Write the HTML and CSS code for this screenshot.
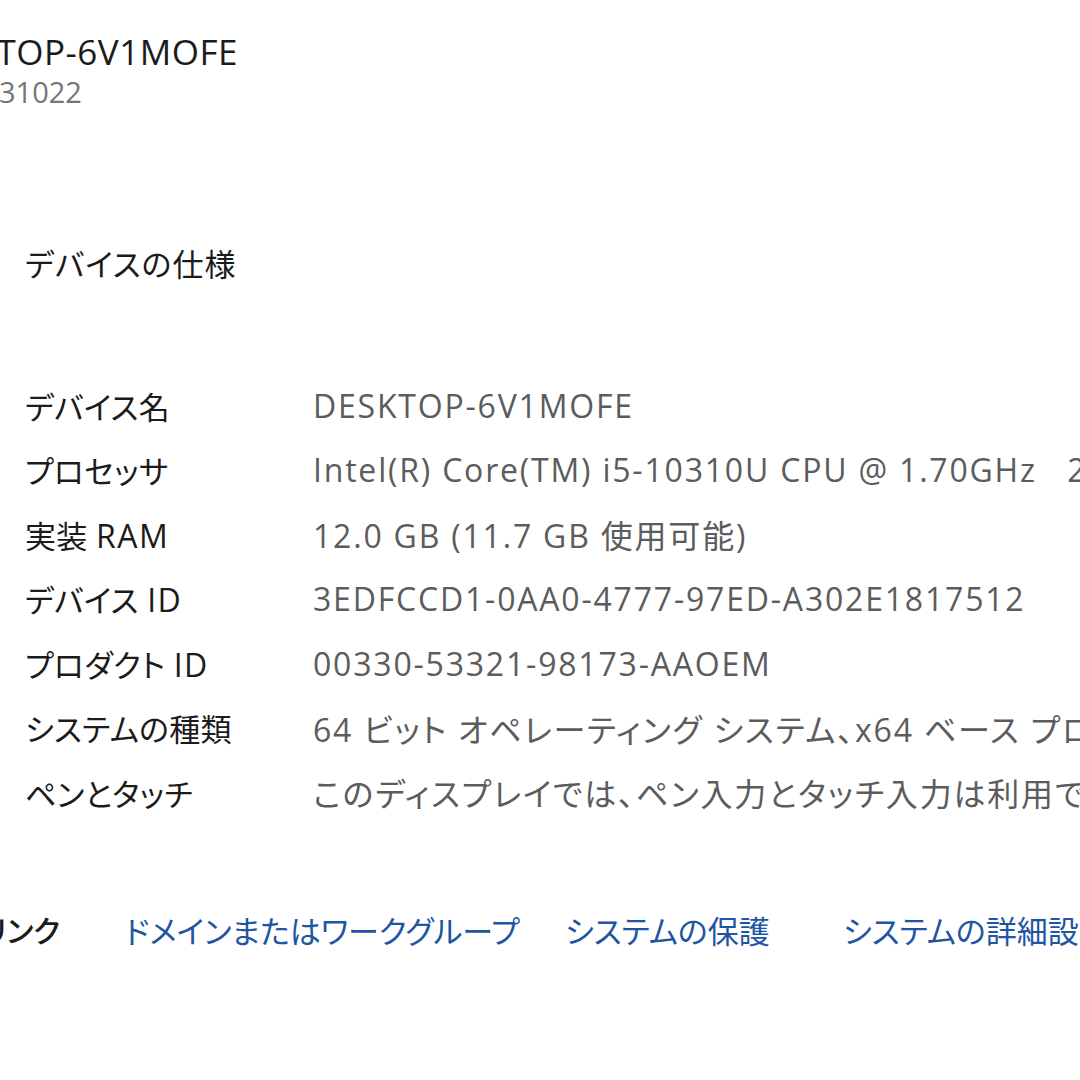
FILE: index.html
```html
<!DOCTYPE html>
<html lang="ja">
<head>
<meta charset="utf-8">
<title>バージョン情報</title>
<link rel="stylesheet" href="styles.css">
</head>
<body>
<div class="page">
  <div class="top">
    <div class="pc-name">DESKTOP-6V1MOFE</div>
    <div class="pc-model">31022</div>
  </div>

  <h2 class="heading">デバイスの仕様</h2>

  <div class="specs">
    <div class="label">デバイス名</div><div class="value">DESKTOP-6V1MOFE</div>
    <div class="label">プロセッサ</div><div class="value">Intel(R) Core(TM) i5-10310U CPU @ 1.70GHz&nbsp;&nbsp;&nbsp;2.21 GHz</div>
    <div class="label">実装 <span class="latin">RAM</span></div><div class="value">12.0 GB (11.7 GB 使用可能)</div>
    <div class="label">デバイス <span class="latin">ID</span></div><div class="value">3EDFCCD1-0AA0-4777-97ED-A302E1817512</div>
    <div class="label">プロダクト <span class="latin">ID</span></div><div class="value">00330-53321-98173-AAOEM</div>
    <div class="label">システムの種類</div><div class="value">64 ビット オペレーティング システム、x64 ベース プロセッサ</div>
    <div class="label">ペンとタッチ</div><div class="value">このディスプレイでは、ペン入力とタッチ入力は利用できません</div>
  </div>

  <div class="links">
    <div class="links-title">関連リンク</div>
    <a class="link" href="#">ドメインまたはワークグループ</a>
    <a class="link" href="#">システムの保護</a>
    <a class="link" href="#">システムの詳細設定</a>
  </div>
</div>
</body>
</html>
```

FILE: styles.css
```css
html, body {
  margin: 0;
  padding: 0;
  background: #ffffff;
}

body {
  width: 1080px;
  height: 1080px;
  overflow: hidden;
  font-family: "Open Sans", "Noto Sans CJK JP", sans-serif;
  font-feature-settings: "palt" 1;
  color: #1b1b1b;
}

.page {
  padding-left: 25px;
  padding-top: 30px;
  white-space: nowrap;
}

.top {
  margin-left: -116px;
}

.pc-name {
  font-size: 35px;
  line-height: 44px;
  letter-spacing: 0.5px;
  color: #1b1b1b;
}

.pc-model {
  margin-left: 90px;
  font-size: 29px;
  line-height: 36px;
  color: #767676;
}

.heading {
  margin: 134px 0 0 0;
  font-size: 31px;
  line-height: 40px;
  letter-spacing: 1px;
  font-weight: normal;
  color: #1b1b1b;
}

.specs {
  margin-top: 89px;
  display: grid;
  grid-template-columns: 288px auto;
  grid-auto-rows: 64.5px;
  align-items: center;
  font-size: 31px;
}

.label {
  color: #1b1b1b;
  letter-spacing: 0.3px;
}

.label .latin {
  font-size: 32px;
  letter-spacing: 1.5px;
}

.value {
  color: #5c5c5c;
  font-size: 32px;
  letter-spacing: 1.8px;
}

.links {
  margin-top: 86px;
  margin-left: -103px;
  display: grid;
  grid-template-columns: 203px 440px 278px auto;
  align-items: center;
  font-size: 31px;
  line-height: 40px;
}

.links-title {
  font-size: 30px;
  font-weight: 500;
  color: #1b1b1b;
}

.link {
  color: #1f55a3;
  text-decoration: none;
}
```
